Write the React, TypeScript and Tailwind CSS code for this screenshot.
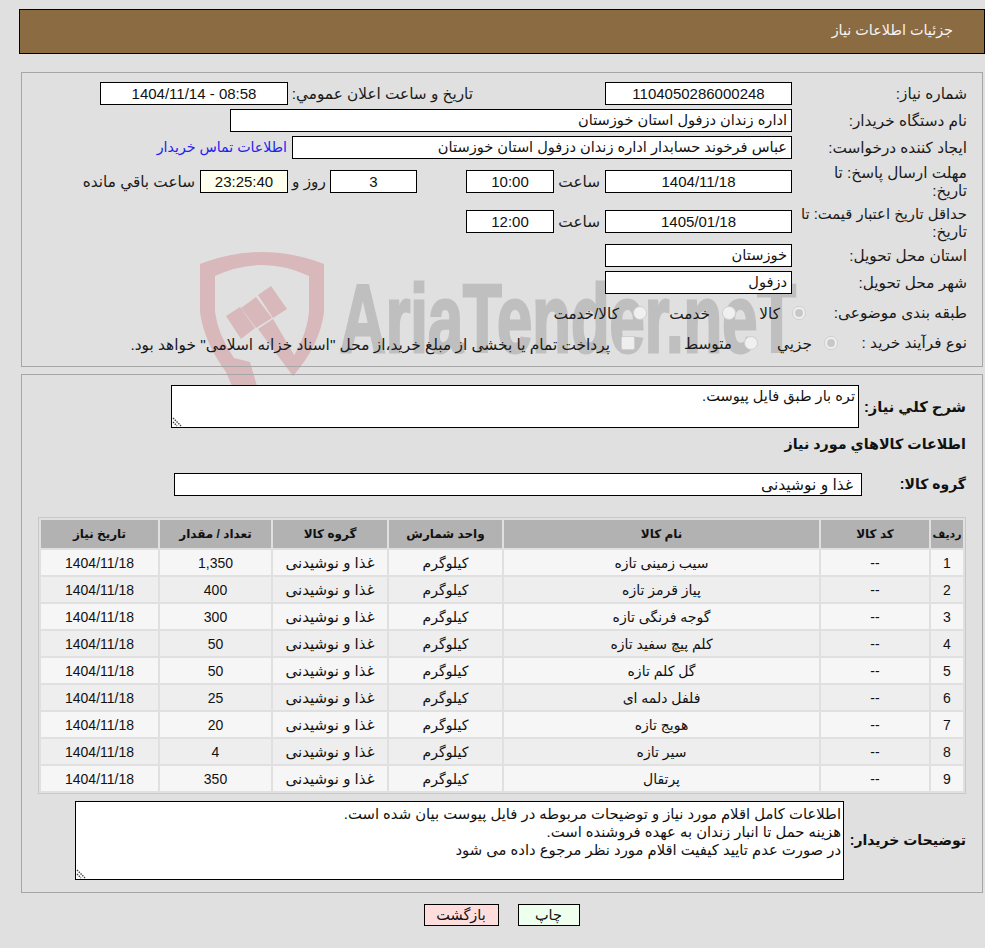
const font = { fontFamily: '"Liberation Sans", "DejaVu Sans", sans-serif' }

const rows = [
  ['1', 'سیب زمینی تازه', '1,350'],
  ['2', 'پیاز قرمز تازه', '400'],
  ['3', 'گوجه فرنگی تازه', '300'],
  ['4', 'کلم پیچ سفید تازه', '50'],
  ['5', 'گل کلم تازه', '50'],
  ['6', 'فلفل دلمه ای', '25'],
  ['7', 'هویج تازه', '20'],
  ['8', 'سیر تازه', '4'],
  ['9', 'پرتقال', '350'],
]

function Box({ w, children, left, bg }: { w: string; children?: React.ReactNode; left?: boolean; bg?: string }) {
  return (
    <div className={`${w} ${bg ?? 'bg-white'} h-[23px] shrink-0 overflow-hidden whitespace-nowrap border border-black px-[3px] leading-[21px] text-[#111] ${left ? 'pr-[4px] text-right text-[14.6px]' : 'text-center text-[15px]'}`}>
      {children}
    </div>
  )
}

function Radio({ on }: { on?: boolean }) {
  return (
    <span className="flex size-[14px] shrink-0 items-center justify-center rounded-full border border-[#cfcfcf] bg-[#f0f0f0]">
      {on && <span className="size-[8px] rounded-full bg-[#c8c8c8]" />}
    </span>
  )
}

function Label({ children, className }: { children: React.ReactNode; className?: string }) {
  return <div className={`shrink-0 text-[15.3px] leading-[18px] text-[#1a1a1a] ${className ?? 'w-[175px]'}`}>{children}</div>
}

function Grip() {
  return (
    <svg viewBox="0 0 10 10" className="absolute bottom-0 left-0 size-[10px]">
      <path d="M1 1 L9 9 M1 5 L5 9" stroke="#444" strokeWidth="1.4" strokeDasharray="1.5 1" />
    </svg>
  )
}

// لوگوی پس زمینه
function Watermark() {
  return (
    <svg viewBox="190 245 620 145" aria-hidden="true" className="pointer-events-none absolute left-[190px] top-[245px] h-[145px] w-[620px]">
      <path
        d="M200 264 Q262 240 324 264 V312 Q320 345 293 376 L287 366 Q306 340 309 312 V276 Q262 254 215 276 V312 Q218 335 234 358 L250 362 L257 386 H232 L226 372 Q204 342 200 312 Z"
        fill="#d8b8ba"
      />
      <path d="M226 316 L240 307 L255 328 L241 339 Z M241 308 L256 297 L272 318 L256 328 Z M258 295 L271 286 L287 309 L273 318 Z M258 329 L273 319 L300 365 L293 376 Z" fill="#d8b8ba" />
      <text direction="ltr" x="340" y="352" fontSize="96" fontWeight="700" fill="#bfbfbf" stroke="#bfbfbf" strokeWidth="3" fontFamily="'Liberation Sans', sans-serif" textLength="456" lengthAdjust="spacingAndGlyphs">
        AriaTender.neT
      </text>
    </svg>
  )
}

export default function App() {
  return (
    <div dir="rtl" style={font} className="relative h-[948px] overflow-hidden bg-[#e0e0e0] pl-[1px] pt-[9px]">
      <Watermark />
      <div className="relative ml-[18px] flex h-[45px] items-center border border-black bg-[#8b6b42] pb-[2px] pr-[31px] text-[14.4px] text-[#f5f5f5]">
        جزئیات اطلاعات نیاز
      </div>

      <section className="relative ml-[20px] mr-[2px] mt-[18px] h-[295px] border border-[#a6a6a6] pt-[9px]">
        <div className="flex flex-col">
          <div className="flex h-[27px] items-start pr-[15px]">
            <Label className="w-[175px] pt-[3px]">شماره نیاز:</Label>
            <Box w="w-[187px]">1104050286000248</Box>
            <div className="mr-[132px] w-[185px] whitespace-nowrap pt-[3px] text-[15.3px] leading-[18px] text-[#1a1a1a]">تاریخ و ساعت اعلان عمومي:</div>
            <Box w="w-[188px]">08:58 - 1404/11/14</Box>
          </div>
          <div className="flex h-[27px] items-start pr-[15px]">
            <Label className="w-[175px] pt-[3px]">نام دستگاه خریدار:</Label>
            <Box w="w-[562px]" left>اداره زندان دزفول استان خوزستان</Box>
          </div>
          <div className="flex h-[34px] items-start pr-[15px]">
            <Label className="w-[175px] pt-[3px]">ایجاد کننده درخواست:</Label>
            <Box w="w-[500px]" left>عباس فرخوند حسابدار اداره زندان دزفول استان خوزستان</Box>
            <div className="mr-[5px] pt-[1px] text-[14.2px] text-[#2222ee]">اطلاعات تماس خریدار</div>
          </div>
          <div className="flex h-[40px] items-start pr-[15px]">
            <Label className="-mt-[6px] w-[175px]">مهلت ارسال پاسخ: تا<br />تاریخ:</Label>
            <Box w="w-[187px]">1404/11/18</Box>
            <div className="mx-[5px] w-[41px] pt-[1px] text-center text-[15.3px] text-[#1a1a1a]">ساعت</div>
            <Box w="w-[88px]">10:00</Box>
            <div className="w-[49px]" />
            <Box w="w-[87px]">3</Box>
            <div className="w-[42px] pt-[1px] text-center text-[15.3px] text-[#1a1a1a]">روز و</div>
            <Box w="w-[88px]" bg="bg-[#ffffee]">23:25:40</Box>
            <div className="mr-[5px] whitespace-nowrap pt-[1px] text-[15.3px] text-[#1a1a1a]">ساعت باقي مانده</div>
          </div>
          <div className="flex h-[34px] items-start pr-[15px]">
            <Label className="-mt-[5px] w-[175px]"><span className="text-[14.8px]">حداقل تاریخ اعتبار قیمت: تا</span><br />تاریخ:</Label>
            <Box w="w-[187px]">1405/01/18</Box>
            <div className="mx-[5px] w-[41px] pt-[1px] text-center text-[15.3px] text-[#1a1a1a]">ساعت</div>
            <Box w="w-[88px]">12:00</Box>
          </div>
          <div className="flex h-[27px] items-start pr-[15px]">
            <Label className="w-[175px] pt-[3px]">استان محل تحویل:</Label>
            <Box w="w-[187px]" left>خوزستان</Box>
          </div>
          <div className="flex h-[27px] items-start pr-[15px]">
            <Label className="w-[175px] pt-[3px]">شهر محل تحویل:</Label>
            <Box w="w-[187px]" left>دزفول</Box>
          </div>
          <div className="flex h-[30px] items-center pr-[15px] text-[15.3px] text-[#1a1a1a]">
            <Label className="w-[161px]">طبقه بندی موضوعی:</Label>
            <Radio on />
            <span className="mr-[12px] w-[44px] pt-[3px]">کالا</span>
            <Radio />
            <span className="mr-[12px] w-[63px] pt-[3px]">خدمت</span>
            <Radio />
            <span className="mr-[14px] pt-[3px]">کالا/خدمت</span>
          </div>
          <div className="flex h-[30px] items-center pr-[15px] text-[15.3px] text-[#1a1a1a]">
            <Label className="w-[129px]">نوع فرآیند خرید :</Label>
            <Radio on />
            <span className="mr-[12px] w-[54px] pt-[3px]">جزیي</span>
            <Radio />
            <span className="mr-[12px] w-[97px] pt-[3px]">متوسط</span>
            <span className="size-[14px] shrink-0 rounded-[2px] border border-[#cfcfcf] bg-[#eeeeee]" />
            <span className="mr-[11px] whitespace-nowrap pt-[3px] text-[15.4px]">پرداخت تمام یا بخشی از مبلغ خرید،از محل "اسناد خزانه اسلامی" خواهد بود.</span>
          </div>
        </div>
      </section>

      <section className="relative ml-[20px] mr-[2px] mt-[7px] h-[519px] border border-[#a6a6a6] pr-[16px] pt-[10px]">
        <div className="flex items-start">
          <div className="w-[107px] shrink-0 pt-[11px] text-[14.7px] font-bold text-[#111]">شرح کلي نیاز:</div>
          <div className="relative h-[43px] w-[688px] border border-black bg-white px-[3px] text-[14.6px] leading-[20px] text-[#111]">
            تره بار طبق فایل پیوست.
            <Grip />
          </div>
        </div>
        <div className="mt-[5px] text-[14.3px] font-bold leading-[22px] text-[#111]">اطلاعات کالاهاي مورد نیاز</div>
        <div className="mt-[18px] flex items-center">
          <div className="w-[104px] shrink-0 text-[14px] font-bold text-[#111]">گروه کالا:</div>
          <div className="h-[23px] w-[688px] border border-black bg-white pl-[7px] pr-[8px] text-[15.5px] leading-[21px] text-[#111]">غذا و نوشیدنی</div>
        </div>

        <div className="ml-[16px] mt-[21px] border border-[#c8c8c8]">
          <table className="w-full table-fixed border-separate border-spacing-[2px] text-center text-[14px] text-[#111]">
            <colgroup>
              <col className="w-[32px]" />
              <col className="w-[108px]" />
              <col className="w-[315px]" />
              <col className="w-[113px]" />
              <col className="w-[114px]" />
              <col className="w-[111px]" />
              <col />
            </colgroup>
            <thead>
              <tr className="h-[28px] bg-[#b2b2b2] text-[12px] font-bold">
                <th className="text-[11px]">ردیف</th>
                <th>کد کالا</th>
                <th>نام کالا</th>
                <th>واحد شمارش</th>
                <th>گروه کالا</th>
                <th>تعداد / مقدار</th>
                <th>تاریخ نیاز</th>
              </tr>
            </thead>
            <tbody>
              {rows.map(([n, name, qty], i) => (
                <tr key={n} className={`h-[25px] ${i % 2 ? 'bg-[#eeeeee]' : 'bg-[#f6f6f6]'}`}>
                  <td className="pt-[2px]">{n}</td>
                  <td className="pt-[2px]">--</td>
                  <td className="pt-[2px]">{name}</td>
                  <td className="pt-[2px]">کیلوگرم</td>
                  <td className="pt-[2px] text-[15px]">غذا و نوشیدنی</td>
                  <td className="pt-[2px]">{qty}</td>
                  <td className="pt-[2px]">1404/11/18</td>
                </tr>
              ))}
            </tbody>
          </table>
        </div>

        <div className="mt-[7px] flex items-center">
          <div className="w-[122px] shrink-0 whitespace-nowrap text-[14px] font-bold text-[#111]">توضیحات خریدار:</div>
          <div className="relative h-[79px] w-[769px] border border-black bg-white px-[2px] pt-[3px] text-[14.8px] leading-[18px] text-[#111]">
            <div>اطلاعات کامل اقلام مورد نیاز و توضیحات مربوطه در فایل پیوست بیان شده است.</div>
            <div>هزینه حمل تا انبار زندان به عهده فروشنده است.</div>
            <div>در صورت عدم تایید کیفیت اقلام مورد نظر مرجوع داده می شود</div>
            <Grip />
          </div>
        </div>
      </section>

      <div className="relative mt-[11px] flex justify-center gap-[19px] pl-[17px] text-[14.5px] text-[#111]">
        <button className="h-[22px] w-[62px] border border-black bg-[#eeffee]">چاپ</button>
        <button className="h-[22px] w-[75px] border border-black bg-[#ffdddd]">بازگشت</button>
      </div>
    </div>
  )
}
